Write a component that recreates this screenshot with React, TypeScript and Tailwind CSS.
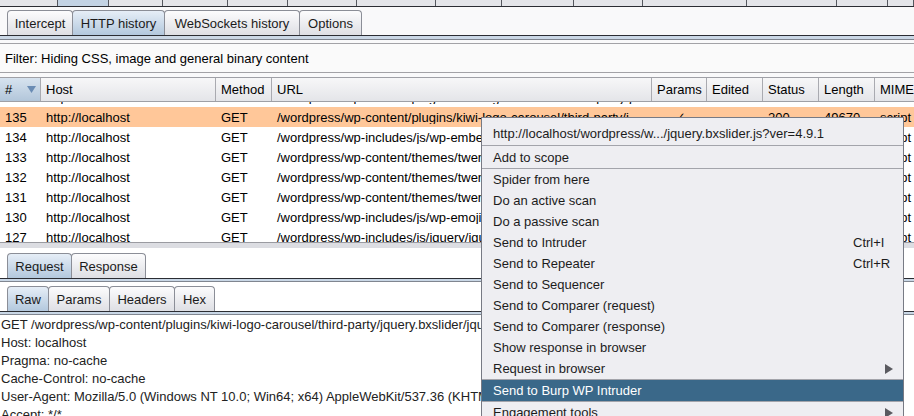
import React from 'react';

// outer tab strip fragments (only the bottoms show)
const outerTabs = [
  'w-[58px]', 'w-[51px]', 'w-[54px]', 'w-[65px]', 'w-[60px]', 'w-[69px]', 'w-[79px]',
  'w-[66px]', 'w-[72px]', 'w-[69px]', 'w-[104px]', 'w-[90px]', 'w-[51px]', 'w-[26px]',
];

const cols = [
  { name: '#', w: 'w-[41px]' },
  { name: 'Host', w: 'w-[175px]' },
  { name: 'Method', w: 'w-[56px]' },
  { name: 'URL', w: 'w-[380px]' },
  { name: 'Params', w: 'w-[55px]' },
  { name: 'Edited', w: 'w-[56px]' },
  { name: 'Status', w: 'w-[56px]' },
  { name: 'Length', w: 'w-[56px]' },
  { name: 'MIME type', w: 'w-[90px]' },
];

const rows = [
  ['136', 'http://localhost', 'GET', '/wordpress/wp-content/plugins/kiwi-logo-carousel/third_party/jquery.bxslider/jquery.bxslider.css', '', '', '200', '1522', 'CSS'],
  ['135', 'http://localhost', 'GET', '/wordpress/wp-content/plugins/kiwi-logo-carousel/third-party/jquery.bxslider/jquery.bxslider.js?ver=4.9.1', '✓', '', '200', '49670', 'script'],
  ['134', 'http://localhost', 'GET', '/wordpress/wp-includes/js/wp-embed.min.js?ver=4.9.1', '✓', '', '200', '1726', 'script'],
  ['133', 'http://localhost', 'GET', '/wordpress/wp-content/themes/twentyseventeen/assets/js/global.js?ver=1.0', '✓', '', '200', '8869', 'script'],
  ['132', 'http://localhost', 'GET', '/wordpress/wp-content/themes/twentyseventeen/assets/js/jquery.scrollTo.js', '✓', '', '200', '11371', 'script'],
  ['131', 'http://localhost', 'GET', '/wordpress/wp-content/themes/twentyseventeen/assets/js/skip-link-focus-fix.js', '✓', '', '200', '1123', 'script'],
  ['130', 'http://localhost', 'GET', '/wordpress/wp-includes/js/wp-emoji-release.min.js?ver=4.9.1', '✓', '', '200', '12110', 'script'],
  ['127', 'http://localhost', 'GET', '/wordpress/wp-includes/js/jquery/jquery.js?ver=1.12.4', '✓', '', '200', '97468', 'script'],
];

const menuItems: { label: string; key?: string; sub?: boolean; sepBefore?: boolean; active?: boolean }[] = [
  { label: 'Spider from here' },
  { label: 'Do an active scan' },
  { label: 'Do a passive scan' },
  { label: 'Send to Intruder', key: 'Ctrl+I' },
  { label: 'Send to Repeater', key: 'Ctrl+R' },
  { label: 'Send to Sequencer' },
  { label: 'Send to Comparer (request)' },
  { label: 'Send to Comparer (response)' },
  { label: 'Show response in browser' },
  { label: 'Request in browser', sub: true },
  { label: 'Send to Burp WP Intruder', sepBefore: true, active: true },
  { label: 'Engagement tools', sub: true, sepBefore: true },
];

const Tab = ({ label, w, active }: { label: string; w: string; active?: boolean }) => (
  <div
    className={`${w} h-[25px] -ml-px first:ml-0 flex items-center justify-center border border-b-0 border-[#8b8e97] rounded-t-[4px] text-[#1b1b1b] ${
      active ? 'bg-linear-to-b from-[#e6eef7] to-[#b3c8dd]' : 'bg-linear-to-b from-[#fcfcfd] to-[#dedfe4]'
    }`}
  >
    {label}
  </div>
);

const TabLine = () => (
  <div>
    <div className="h-px bg-[#2b2d33]" />
    <div className="h-[2px] bg-[#c9d7e6]" />
    <div className="h-px bg-[#808690]" />
  </div>
);

const Arrow = () => (
  <svg width="8" height="10" viewBox="0 0 8 10">
    <path d="M0 0 L8 5 L0 10 Z" fill="#5a5a60" />
  </svg>
);

export default function App() {
  return (
    <div className="relative w-[914px] h-[416px] overflow-hidden bg-white text-[13px] text-black font-['Liberation_Sans',Arial,sans-serif] leading-none">
      {/* outer tabs (cut off) */}
      <div className="flex h-[6px]">
        {outerTabs.map((w, i) => (
          <div
            key={i}
            className={`${w} shrink-0 h-full border-r border-[#55585f] ${i === 1 ? 'bg-[#c3d3e4]' : 'bg-[#e4e5e9]'}`}
          />
        ))}
      </div>
      <div className="h-px bg-[#2b2d33]" />

      {/* proxy sub tabs */}
      <div className="bg-[#f9f9fa] pt-[3px] pl-[7px] flex">
        <Tab label="Intercept" w="w-[66px]" />
        <Tab label="HTTP history" w="w-[93px]" active />
        <Tab label="WebSockets history" w="w-[136px]" />
        <Tab label="Options" w="w-[63px]" />
      </div>
      <div className="h-px bg-[#2b2d33]" />
      <div className="h-[3px] bg-[#cbd8e6]" />
      <div className="h-px bg-[#7d838d]" />
      <div className="h-[3px] bg-[#f9f9fa]" />

      {/* filter bar */}
      <div className="h-[30px] border-y border-[#a2a2a6] bg-[#fafafa] flex items-center pl-[5px]">
        Filter: Hiding CSS, image and general binary content
      </div>
      <div className="h-[4px] bg-[#f9f9fa]" />

      {/* table header */}
      <div className="flex h-[25px] border-y border-[#9fa0a6] bg-linear-to-b from-[#f7f7f8] to-[#e4e5e9] whitespace-nowrap">
        {cols.map((c, i) => (
          <div
            key={c.name}
            className={`${c.w} shrink-0 border-r border-[#a9aab0] flex items-center pl-[5px] ${
              i === 0 ? 'bg-linear-to-b from-[#d7e3ef] to-[#b2c6da] justify-between pr-[4px]' : ''
            }`}
          >
            <span>{c.name}</span>
            {i === 0 && (
              <svg width="9" height="7" viewBox="0 0 9 7">
                <path d="M0 0 H9 L4.5 7 Z" fill="#6a8cb4" />
              </svg>
            )}
          </div>
        ))}
      </div>

      {/* table body */}
      <div className="h-[140px] overflow-hidden">
        <div className="mt-[-15px]">
          {rows.map((r) => (
            <div key={r[0]} className={`flex h-[20px] items-center whitespace-nowrap ${r[0] === '135' ? 'bg-[#ffc799]' : 'bg-white'}`}>
              {cols.map((c, i) => (
                <div
                  key={c.name}
                  className={`${c.w} shrink-0 overflow-hidden text-ellipsis pl-[5px] pr-[3px] ${i === 4 ? 'text-center pl-0 font-["DejaVu_Sans"] text-[12px]' : ''}`}
                >
                  {r[i]}
                </div>
              ))}
            </div>
          ))}
        </div>
      </div>
      <div className="h-px bg-[#9a9ba1]" />
      <div className="h-[5px] bg-[#dcdde2]" />
      <div className="h-[5px] bg-white" />

      {/* request / response */}
      <div className="flex pl-[7px]">
        <Tab label="Request" w="w-[65px]" active />
        <Tab label="Response" w="w-[75px]" />
      </div>
      <TabLine />
      <div className="h-[4px]" />
      <div className="flex pl-[7px]">
        <Tab label="Raw" w="w-[42px]" active />
        <Tab label="Params" w="w-[62px]" />
        <Tab label="Headers" w="w-[66px]" />
        <Tab label="Hex" w="w-[41px]" />
      </div>
      <TabLine />

      <div className="pt-px pl-px leading-[18px] text-[#222] whitespace-nowrap">
        <div>GET /wordpress/wp-content/plugins/kiwi-logo-carousel/third-party/jquery.bxslider/jquery.bxslider.js?ver=4.9.1 HTTP/1.1</div>
        <div>Host: localhost</div>
        <div>Pragma: no-cache</div>
        <div>Cache-Control: no-cache</div>
        <div>User-Agent: Mozilla/5.0 (Windows NT 10.0; Win64; x64) AppleWebKit/537.36 (KHTML, like Gecko) Chrome/63.0 Safari/537.36</div>
        <div>Accept: */*</div>
      </div>

      {/* context menu */}
      <div className="absolute left-[481px] top-[117px] w-[423px] border border-[#777a84] bg-[#eeeef2] text-[#1c1c1c] whitespace-nowrap">
        <div className="h-[27px] flex items-center pl-[11px] pt-[4px]">
          http://localhost/wordpress/w.../jquery.bxslider.js?ver=4.9.1
        </div>
        <div className="h-px bg-[#a3a4ab]" />
        <div className="h-[22px] flex items-center pl-[11px]">Add to scope</div>
        <div className="h-px bg-[#a3a4ab]" />
        {menuItems.map((m) => (
          <React.Fragment key={m.label}>
            {m.sepBefore && <div className="h-px bg-[#a3a4ab]" />}
            <div
              className={`h-[21px] flex items-center justify-between pl-[11px] pr-[10px] ${
                m.active ? 'bg-[#3a6889] text-white' : ''
              }`}
            >
              <span>{m.label}</span>
              {m.key && <span className="w-[40px]">{m.key}</span>}
              {m.sub && <Arrow />}
            </div>
          </React.Fragment>
        ))}
      </div>
    </div>
  );
}
